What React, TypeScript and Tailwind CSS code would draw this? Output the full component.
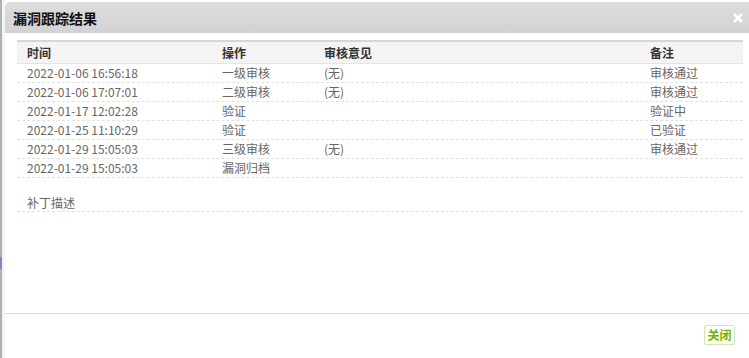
import React from "react";

const rows = [
  ["2022-01-06 16:56:18", "一级审核", "(无)", "审核通过"],
  ["2022-01-06 17:07:01", "二级审核", "(无)", "审核通过"],
  ["2022-01-17 12:02:28", "验证", "", "验证中"],
  ["2022-01-25 11:10:29", "验证", "", "已验证"],
  ["2022-01-29 15:05:03", "三级审核", "(无)", "审核通过"],
  ["2022-01-29 15:05:03", "漏洞归档", "", ""],
];

export default function App() {
  return (
    <div
      className="w-[749px] h-[358px] flex bg-white overflow-hidden"
      style={{ fontFamily: '"Noto Sans CJK SC", "Noto Sans", sans-serif' }}
    >
      <div className="w-[2px] h-full flex flex-col">
        <div className="h-[257px] bg-[#b0b0b0]" />
        <div className="h-[12px] bg-[#8c80c8]" />
        <div className="flex-1 bg-[#b0b0b0]" />
      </div>
      <div className="w-[3px] h-full bg-[#f4f4f4]" />
      <div className="flex-1 flex flex-col pt-[2px]">
        <div className="h-[31px] rounded-tl-[5px] bg-gradient-to-b from-[#dddddd] to-[#d2d2d2] flex items-center justify-between pl-[8px] pr-[6px]">
          <span className="text-[14px] font-bold text-[#111] leading-none">漏洞跟踪结果</span>
          <svg width="10" height="10" viewBox="0 0 10 10" className="mt-[1px]">
            <path d="M2 2 L8 8 M8 2 L2 8" stroke="#ffffff" strokeWidth="2.8" strokeLinecap="square" />
          </svg>
        </div>
        <div className="h-[280px] pl-[12px] pr-[6px] pt-[7px] flex flex-col">
          <div className="grid grid-cols-[195px_102px_1fr_103px] h-[24px] bg-[#f4f4f4] border-t-2 border-[#d6d6d6] border-b border-b-[#e4e4e4] text-[12px] font-bold text-[#333] items-center">
            <div className="pl-[10px]">时间</div>
            <div className="pl-[10px]">操作</div>
            <div className="pl-[10px]">审核意见</div>
            <div className="pl-[10px]">备注</div>
          </div>
          {rows.map((r, i) => (
            <div
              key={i}
              className="grid grid-cols-[195px_102px_1fr_103px] h-[19px] border-b border-dashed border-[#e2e2e2] text-[12px] text-[#666] items-center leading-none"
            >
              <div className="pl-[10px]">{r[0]}</div>
              <div className="pl-[10px]">{r[1]}</div>
              <div className="pl-[10px]">{r[2]}</div>
              <div className="pl-[10px]">{r[3]}</div>
            </div>
          ))}
          <div className="mt-[14px] h-[20px] border-b border-dashed border-[#e2e2e2] text-[12px] text-[#666] flex items-center pl-[10px] pt-[2px]">
            补丁描述
          </div>
        </div>
        <div className="h-px bg-[#dcdcdc]" />
        <div className="flex justify-end pr-[14px] pt-[11px]">
          <div className="w-[31px] h-[20px] border border-[#cdeaa6] rounded-[2px] flex items-center justify-center text-[12px] font-bold text-[#72b400] leading-none">
            关闭
          </div>
        </div>
      </div>
    </div>
  );
}
